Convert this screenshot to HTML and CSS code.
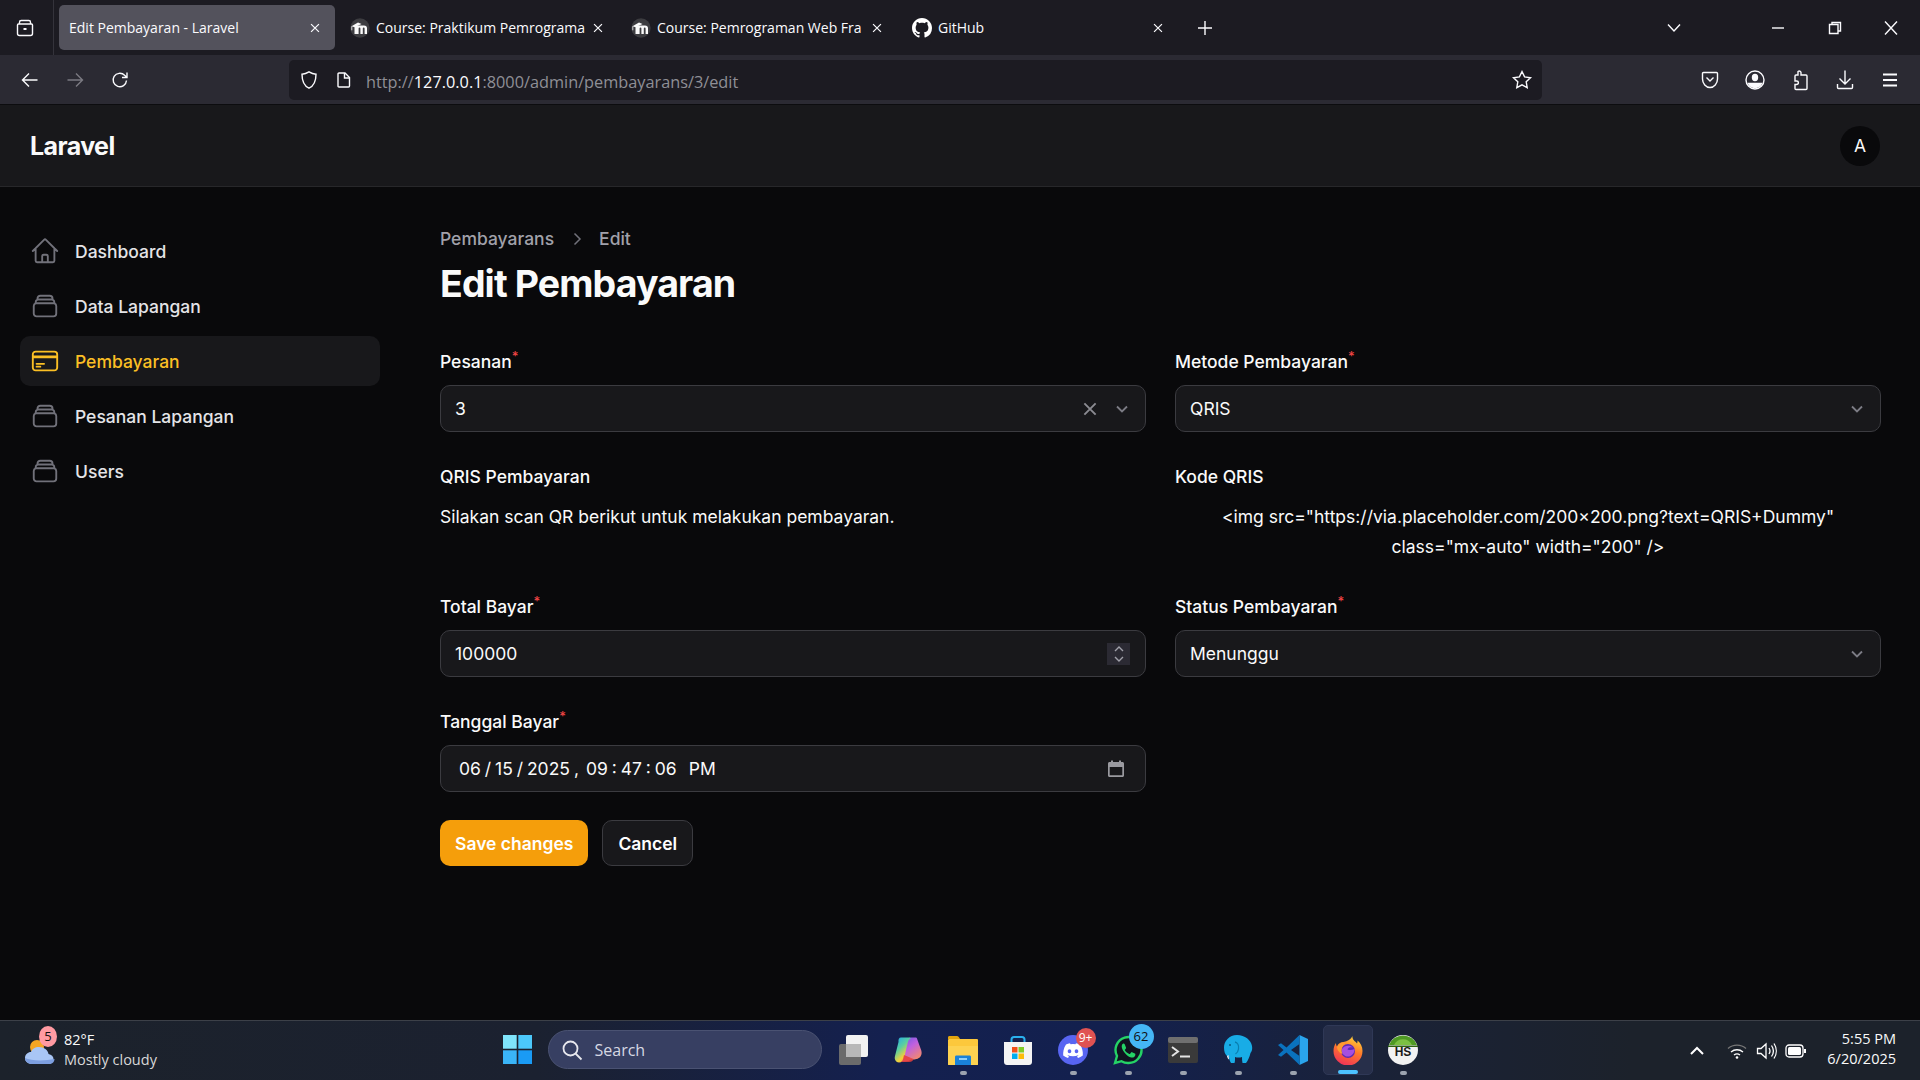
FILE: index.html
```html
<!DOCTYPE html>
<html>
<head>
  <title>Edit Pembayaran - Laravel</title>
  <link rel="stylesheet" href="styles.css">
</head>
<body>
  <svg class="defs" width="0" height="0">
    <symbol id="stack" viewBox="0 0 24 24"><path d="M6 6.878V6a2.25 2.25 0 012.25-2.25h7.5A2.25 2.25 0 0118 6v.878m-12 0c.235-.083.487-.128.75-.128h10.5c.263 0 .515.045.75.128m-12 0A2.25 2.25 0 004.5 9v.878m13.5-3A2.25 2.25 0 0119.5 9v.878m0 0a2.246 2.246 0 00-.75-.128H5.25c-.263 0-.515.045-.75.128m15 0A2.25 2.25 0 0121 12v6a2.25 2.25 0 01-2.25 2.25H5.25A2.25 2.25 0 013 18v-6c0-.98.626-1.813 1.5-2.122"/></symbol>
    <symbol id="chev" viewBox="0 0 20 20"><path d="M5 7.5l5 5 5-5"/></symbol>
    <symbol id="x" viewBox="0 0 16 16"><path d="M3.5 3.5l9 9M12.5 3.5l-9 9"/></symbol>
    <symbol id="moodle" viewBox="0 0 20 20"><circle cx="10" cy="10" r="9.700" fill="#3c3c40"/><path d="M4.500 16V9.500c0-1.300.9-2 2-2h7.500c1.900 0 3 1 3 2.800V16h-2.400V10.500c0-.6-.3-1-.9-1s-.9.4-.9 1V16h-2.400V10.500c0-.6-.3-1-.9-1s-.9.4-.9 1V16z" fill="#fafafa"/><path d="M1.500 8.300L8 4.500l3.500 1.500-7 3.200z" fill="#fafafa"/><path d="M1.800 8.300v4" stroke="#fafafa" stroke-width=".8"/></symbol>
  </svg>

  <div class="tabstrip">
    <div class="strip-btn">
      <svg class="ico" width="20" height="20" viewBox="0 0 20 20"><path d="M4.5 6V4.2c0-1 .7-1.7 1.7-1.7h7.6c1 0 1.7.7 1.7 1.7V6M3.5 6h13c.6 0 1 .4 1 1v8.500c0 1.100-.9 2-2 2h-11c-1.100 0-2-.9-2-2V7c0-.6.4-1 1-1z"/><path d="M8.500 11h3" stroke-width="2"/></svg>
    </div>
    <div class="tab tab-active">
      <span class="tab-title">Edit Pembayaran - Laravel</span>
      <svg class="ico tab-x" width="16" height="16"><use href="#x"/></svg>
    </div>
    <div class="tab">
      <svg class="favicon" width="20" height="20"><use href="#moodle"/></svg>
      <span class="tab-title">Course: Praktikum Pemrograma</span>
      <svg class="ico tab-x" width="16" height="16"><use href="#x"/></svg>
    </div>
    <div class="tab">
      <svg class="favicon" width="20" height="20"><use href="#moodle"/></svg>
      <span class="tab-title">Course: Pemrograman Web Fra</span>
      <svg class="ico tab-x" width="16" height="16"><use href="#x"/></svg>
    </div>
    <div class="tab">
      <svg class="favicon" width="20" height="20" viewBox="0 0 16 16"><path fill="#fff" d="M8 0C3.580 0 0 3.580 0 8c0 3.540 2.290 6.530 5.470 7.590.4.070.55-.17.55-.38 0-.19-.01-.82-.01-1.490-2.010.37-2.530-.49-2.690-.94-.09-.23-.48-.94-.82-1.130-.28-.15-.68-.52-.01-.53.63-.01 1.080.58 1.230.82.72 1.210 1.870.87 2.330.66.07-.52.28-.87.51-1.070-1.780-.2-3.640-.89-3.640-3.950 0-.87.31-1.590.82-2.150-.08-.2-.36-1.020.08-2.120 0 0 .67-.21 2.200.82.64-.18 1.320-.27 2-.27s1.360.09 2 .27c1.530-1.040 2.200-.82 2.200-.82.44 1.100.16 1.920.08 2.120.51.56.82 1.270.82 2.150 0 3.070-1.870 3.750-3.650 3.950.29.25.54.73.54 1.480 0 1.070-.01 1.930-.01 2.200 0 .21.15.46.55.38A8.010 8.010 0 0016 8c0-4.420-3.580-8-8-8z"/></svg>
      <span class="tab-title">GitHub</span>
      <svg class="ico tab-x" width="16" height="16"><use href="#x"/></svg>
    </div>
    <svg class="ico strip-plus" width="18" height="18" viewBox="0 0 18 18"><path d="M9 2v14M2 9h14"/></svg>
    <div class="strip-right">
      <svg class="ico" width="18" height="18" viewBox="0 0 18 18"><path d="M3 5.500l6 6.500 6-6.500"/></svg>
      <div class="win-btns">
        <svg class="ico win-min" width="14" height="14" viewBox="0 0 14 14"><path d="M1 7h12"/></svg>
        <svg class="ico" width="14" height="14" viewBox="0 0 14 14"><path d="M4 3V1.500h8.500V10H10.500M1.500 3.500H10V12.500H1.500z"/></svg>
        <svg class="ico" width="16" height="16" viewBox="0 0 16 16"><path d="M2 1.500l12 13M14 1.500l-12 13"/></svg>
      </div>
    </div>
  </div>

  <div class="navbar">
    <div class="nav-left">
      <svg class="ico" width="20" height="20" viewBox="0 0 20 20"><path d="M17.500 10h-15M9 3.500L2.500 10 9 16.500"/></svg>
      <svg class="ico ico-dim" width="20" height="20" viewBox="0 0 20 20"><path d="M2.500 10h15M11 3.500l6.500 6.500-6.500 6.500"/></svg>
      <svg class="ico" width="20" height="20" viewBox="0 0 20 20"><path d="M16.500 10.500a6.700 6.700 0 11-1.900-5.200L17 7.500M17 2.500v5h-5"/></svg>
    </div>
    <div class="urlbar">
      <svg class="ico" width="20" height="20" viewBox="0 0 20 20"><path d="M10 1.800c2.500 1.500 4.700 2.200 7 2.400 0 6.500-1.800 11.500-7 14-5.200-2.500-7-7.500-7-14 2.300-.2 4.500-.9 7-2.400z"/></svg>
      <svg class="ico url-page" width="18" height="18" viewBox="0 0 18 18"><path d="M4 2h6l4.500 4.500V15c0 .6-.4 1-1 1H4c-.6 0-1-.4-1-1V3c0-.6.4-1 1-1z"/><path d="M9.500 2v5h5" /></svg>
      <span class="url">http://<b>127.0.0.1</b>:8000/admin/pembayarans/3/edit</span>
      <svg class="ico url-star" width="22" height="22" viewBox="0 0 22 22"><path d="M11 2.500l2.600 5.400 5.900.8-4.300 4.100 1 5.900-5.200-2.800-5.200 2.800 1-5.900-4.300-4.100 5.900-.8z"/></svg>
    </div>
    <div class="nav-right">
      <svg class="ico" width="20" height="20" viewBox="0 0 20 20"><path d="M3.500 2.500h13c.6 0 1 .4 1 1V9c0 4.500-3.500 8.500-7.500 8.500S2.500 13.500 2.500 9V3.500c0-.6.400-1 1-1z"/><path d="M6.500 7.500L10 11l3.500-3.500"/></svg>
      <svg class="ico" width="22" height="22" viewBox="0 0 22 22"><circle cx="11" cy="11" r="9"/><ellipse cx="11" cy="8.500" rx="2.500" ry="3" fill="#fbfbfe"/><path d="M4.500 14.500h13c-1.500 3-4 4-6.500 4s-5-1-6.500-4z" fill="#fbfbfe"/></svg>
      <svg class="ico nav-ext" width="20" height="22" viewBox="0 0 20 22"><path d="M8 2.500c1.500-1 3.500 0 3 2v1.500h5c.6 0 1 .4 1 1v12.500c0 .6-.4 1-1 1H6c-.6 0-1-.4-1-1v-4h1.500c2.500 0 2.500-3.500 0-3.500H5V7c0-.6.4-1 1-1h2z"/></svg>
      <svg class="ico nav-dl" width="20" height="22" viewBox="0 0 20 22"><path d="M10 1.500v13M4.500 9.500l5.500 5.500 5.500-5.500M2.500 15v3.500c0 .6.400 1 1 1h13c.6 0 1-.4 1-1V15"/></svg>
      <svg class="ico" width="20" height="20" viewBox="0 0 20 20"><path d="M3 4.500h14M3 10h14M3 15.500h14" stroke-width="1.800"/></svg>
    </div>
  </div>

  <header class="app-header">
    <span class="brand">Laravel</span>
    <span class="avatar">A</span>
  </header>

  <div class="app-body">
    <nav class="sidebar">
      <a class="side-item">
        <svg class="side-ico" width="30" height="30" viewBox="0 0 24 24"><path d="M2.250 12l8.954-8.955c.44-.439 1.152-.439 1.591 0L21.750 12M4.500 9.750v10.125c0 .621.504 1.125 1.125 1.125H9.750v-4.875c0-.621.504-1.125 1.125-1.125h2.250c.621 0 1.125.504 1.125 1.125V21h4.125c.621 0 1.125-.504 1.125-1.125V9.750M8.250 21h8.250"/></svg>
        Dashboard
      </a>
      <a class="side-item"><svg class="side-ico" width="30" height="30"><use href="#stack"/></svg>Data Lapangan</a>
      <a class="side-item side-active">
        <svg class="side-ico" width="30" height="30" viewBox="0 0 24 24"><path d="M2.250 8.250h19.500M2.250 9h19.500m-16.500 5.250h6m-6 2.250h3m-3.750 3h15a2.250 2.250 0 002.250-2.250V6.750A2.250 2.250 0 0019.500 4.500h-15a2.250 2.250 0 00-2.250 2.250v10.500A2.250 2.250 0 004.500 19.500z"/></svg>
        Pembayaran
      </a>
      <a class="side-item"><svg class="side-ico" width="30" height="30"><use href="#stack"/></svg>Pesanan Lapangan</a>
      <a class="side-item"><svg class="side-ico" width="30" height="30"><use href="#stack"/></svg>Users</a>
    </nav>

    <main class="content">
      <div class="crumbs">
        <span>Pembayarans</span>
        <svg class="crumb-sep" width="20" height="20" viewBox="0 0 20 20"><path d="M7.500 4.500l5.500 5.500-5.500 5.500"/></svg>
        <span>Edit</span>
      </div>
      <h1>Edit Pembayaran</h1>

      <form class="form-grid">
        <div class="field">
          <label class="lbl">Pesanan<sup>*</sup></label>
          <div class="control">
            <span class="control-val">3</span>
            <svg class="ctl-ico ctl-x" width="20" height="20" viewBox="0 0 16 16"><use href="#x"/></svg>
            <svg class="ctl-ico" width="20" height="20"><use href="#chev"/></svg>
          </div>
        </div>
        <div class="field">
          <label class="lbl">Metode Pembayaran<sup>*</sup></label>
          <div class="control">
            <span class="control-val">QRIS</span>
            <svg class="ctl-ico" width="20" height="20"><use href="#chev"/></svg>
          </div>
        </div>

        <div class="field">
          <label class="lbl">QRIS Pembayaran</label>
          <p class="plain">Silakan scan QR berikut untuk melakukan pembayaran.</p>
        </div>
        <div class="field">
          <label class="lbl">Kode QRIS</label>
          <p class="plain plain-center">&lt;img src="https://via.placeholder.com/200x200.png?text=QRIS+Dummy" class="mx-auto" width="200" /&gt;</p>
        </div>

        <div class="field">
          <label class="lbl">Total Bayar<sup>*</sup></label>
          <div class="control">
            <span class="control-val">100000</span>
            <span class="spin">
              <svg width="12" height="10" viewBox="0 0 12 10"><path d="M2 7l4-4 4 4"/></svg>
              <svg width="12" height="10" viewBox="0 0 12 10"><path d="M2 3l4 4 4-4"/></svg>
            </span>
          </div>
        </div>
        <div class="field">
          <label class="lbl">Status Pembayaran<sup>*</sup></label>
          <div class="control">
            <span class="control-val">Menunggu</span>
            <svg class="ctl-ico" width="20" height="20"><use href="#chev"/></svg>
          </div>
        </div>

        <div class="field">
          <label class="lbl">Tanggal Bayar<sup>*</sup></label>
          <div class="control control-date">
            <span class="control-val date-val">06 / 15 / 2025 ,<span class="date-time">09 : 47 : 06</span><span class="date-ampm">PM</span></span>
            <svg class="cal" width="20" height="20" viewBox="0 0 20 20"><path d="M5 1.500h2V4H5zM13 1.500h2V4h-2z" fill="#9a9aa0"/><path d="M2 4.500c0-.8.7-1.500 1.500-1.500h13c.8 0 1.500.7 1.500 1.500v12c0 .8-.7 1.500-1.500 1.500h-13c-.8 0-1.500-.7-1.500-1.500zM3.700 8v8.300h12.600V8z" fill="#9a9aa0" fill-rule="evenodd"/></svg>
          </div>
        </div>
      </form>

      <div class="actions">
        <button class="btn btn-save" type="button">Save changes</button>
        <button class="btn btn-cancel" type="button">Cancel</button>
      </div>
    </main>
  </div>

  <footer class="taskbar">
    <div class="weather">
      <div class="weather-ico">
        <svg width="32" height="34" viewBox="0 0 32 34">
          <circle cx="13" cy="13" r="7" fill="#f5a623"/>
          <path d="M8 30c-4 0-7-2.500-7-6s3-6 6-6c1-3 4-5 8-5 5 0 9 3 9.500 7 3 .5 5 2.500 5 5 0 3-2.500 5-5.500 5z" fill="#a9c6f5"/>
          <path d="M8 30c-4 0-7-2.500-7-6 6 3 20 3 29.500 1 0 3-2.500 5-5.500 5z" fill="#7d9fe0"/>
        </svg>
        <span class="weather-badge">5</span>
      </div>
      <div class="weather-text">
        <span class="temp">82°F</span>
        <span class="cond">Mostly cloudy</span>
      </div>
    </div>

    <div class="task-center">
      <div class="task-btn">
        <svg width="29" height="29" viewBox="0 0 29 29"><path d="M0 0h13.700v13.700H0z" fill="#7fe4fb"/><path d="M15.300 0H29v13.700H15.300z" fill="#4cc8fa"/><path d="M0 15.300h13.700V29H0z" fill="#3ab4f7"/><path d="M15.300 15.300H29V29H15.300z" fill="#1a9bf5"/></svg>
      </div>
      <div class="search">
        <svg width="22" height="22" viewBox="0 0 22 22" class="search-ico"><circle cx="9.500" cy="9.500" r="7"/><path d="M14.500 14.500l6 6"/></svg>
        <span>Search</span>
      </div>
      <div class="task-btn">
        <svg width="30" height="30" viewBox="0 0 30 30"><rect x="1" y="9" width="22" height="21" rx="2" fill="#6b6b6b"/><rect x="8" y="0" width="22" height="22" rx="2" fill="#f2f2f2"/><rect x="8" y="9" width="15" height="13" fill="#b8b8b8"/></svg>
      </div>
      <div class="task-btn">
        <svg width="30" height="30" viewBox="0 0 30 30"><defs><linearGradient id="cp1" x1="0" y1="0" x2=".6" y2="1"><stop offset="0" stop-color="#1fa8f0"/><stop offset=".45" stop-color="#5ad0a0"/><stop offset=".8" stop-color="#f4d13a"/><stop offset="1" stop-color="#f0a030"/></linearGradient><linearGradient id="cp2" x1="0" y1="0" x2=".7" y2="1"><stop offset="0" stop-color="#5a5ae8"/><stop offset=".5" stop-color="#c060e0"/><stop offset="1" stop-color="#f48a6a"/></linearGradient></defs><path d="M23 2.500h-5c-2.500 0-3.500 1.500-4 3.500l-3.500 15c-.7 2.800-2 5-4.500 5 6 1 10 .5 12-1.500 1.500 0 7 .5 9.500-3 1-1.500 1.500-3.500.8-6L24.500 5c-.4-1.500-.7-2.500-1.500-2.500z" fill="url(#cp2)"/><path d="M8 2.500h8c1 0 1.700.4 1.800 1-1.800.6-2.500 2-2.900 3.600l-3.700 15.400c-.7 3-2.600 5-5.200 5-3 0-5-3-4-6.500l3.500-14C5.300 4 6 2.500 8 2.500z" fill="url(#cp1)"/><path d="M11 20l-.8 3.500c-.3 1.500-1.200 3-2.200 3.500h8c2.500 0 4-1 4.500-3z" fill="#e8403c" opacity=".85"/></svg>
      </div>
      <div class="task-btn has-dot">
        <svg width="30" height="30" viewBox="0 0 30 30"><path d="M0 2.500C0 1.500.7 1 1.500 1H9c1.200 0 2 1 3 3h-12z" fill="#e3a50e"/><rect y="4" width="30" height="26" rx="1" fill="#fcc83c"/><path d="M0 11h30v18c0 .6-.4 1-1 1H1c-.6 0-1-.4-1-1z" fill="#fdd251"/><path d="M7 22c0-1 .6-1.500 1.500-1.500h13c.9 0 1.500.5 1.500 1.500v8H7z" fill="#1a82d8"/><rect x="11" y="23" width="8" height="2" fill="#8fd0fa"/></svg>
      </div>
      <div class="task-btn">
        <svg width="30" height="30" viewBox="0 0 30 30"><path d="M8.500 8V4.500c0-1.400 1-2.500 2.500-2.500h8c1.500 0 2.500 1.100 2.500 2.500V8" fill="none" stroke="#2ab0ee" stroke-width="2"/><path d="M1 7h28v20c0 1.700-1.300 3-3 3H4c-1.700 0-3-1.300-3-3z" fill="#f4f4f4"/><rect x="9" y="12" width="5.500" height="5.500" fill="#f1511b"/><rect x="15.500" y="12" width="5.500" height="5.500" fill="#80cc28"/><rect x="9" y="18.500" width="5.500" height="5.500" fill="#00adef"/><rect x="15.500" y="18.500" width="5.500" height="5.500" fill="#fbbc09"/></svg>
      </div>
      <div class="task-btn has-dot task-badged">
        <svg width="30" height="30" viewBox="0 0 30 30"><circle cx="15" cy="15" r="15" fill="#5865f2"/><path d="M22 9.500a16 16 0 00-4-1.200l-.5 1a14 14 0 00-5 0l-.5-1a16 16 0 00-4 1.200C5.500 13.400 5 17 5.200 20.600c1.600 1.200 3.200 1.900 4.800 2.400l1-1.600c-.5-.2-1-.5-1.500-.8l.4-.3c3 1.400 7.200 1.400 10.200 0l.4.3c-.5.300-1 .6-1.500.8l1 1.600c1.600-.5 3.200-1.200 4.800-2.400.3-4.200-.6-7.700-2.800-11.100zM11.500 18.300c-1 0-1.800-.9-1.800-2s.8-2 1.800-2 1.800.9 1.800 2-.8 2-1.800 2zm7 0c-1 0-1.800-.9-1.800-2s.8-2 1.800-2 1.800.9 1.800 2-.8 2-1.800 2z" fill="#fff"/></svg>
        <span class="t-badge t-badge-red">9+</span>
      </div>
      <div class="task-btn has-dot task-badged">
        <svg width="30" height="30" viewBox="0 0 30 30"><path d="M2 28l2-7A13 13 0 1115 28a13 13 0 01-6.500-1.800z" fill="#10131f" stroke="#25d366" stroke-width="2.400"/><path d="M10.500 8.500c-.7 0-1.800 1-1.800 3 0 2.200 1.600 4.400 2 5 .4.500 3.200 5 7.500 6 2 .4 3.700-.7 4-2 .2-.8.200-1.500.1-1.700l-3.200-1.600c-.4-.2-.7 0-1 .4l-1 1.200c-.2.300-.5.300-.9.100-2.300-1-3.600-2.500-4.300-3.700-.2-.4 0-.6.200-.8l.8-1c.2-.3.2-.5.100-.8l-1.300-3.300c-.3-.7-.6-.8-1.200-.8z" fill="#25d366"/></svg>
        <span class="t-badge t-badge-blue">62</span>
      </div>
      <div class="task-btn has-dot">
        <svg width="30" height="26" viewBox="0 0 30 26"><rect width="30" height="26" rx="2" fill="#3a3a3a"/><rect width="30" height="6" rx="2" fill="#6f6f6f"/><path d="M4 10l6 4.500-6 4.500" fill="none" stroke="#e4e4e4" stroke-width="2"/><path d="M12 19.500h10" stroke="#e4e4e4" stroke-width="2"/></svg>
      </div>
      <div class="task-btn has-dot">
        <svg width="30" height="32" viewBox="0 0 30 32"><path d="M14 1c-4 0-7 1.500-9.500 4C2 7.500 1 10.500 1 13.500c0 4 1 7 3 8.500 1 .7 1.500 0 1.500-1 .5 3 1 6 2.500 8h3.500c.7-2 .5-4 .5-6 2 .7 5 .7 7 0 0 2 0 4 .5 6H23c2-2.500 3.500-6 4.500-10 1.500-2 2-4 1.500-7C28 6 22 1 14 1z" fill="#18ace6"/><path d="M4 22c.4 2 1 3 2 3.500 0-2-.3-3-.5-4.500z" fill="#e8f6fc"/><path d="M12 8c2.500.5 4 3.500 3.500 7-.3 2.500-1.500 4-3 5" fill="none" stroke="#0a7fb0" stroke-width="1.300"/><circle cx="7" cy="11" r="1" fill="#075a80"/></svg>
      </div>
      <div class="task-btn has-dot">
        <svg width="30" height="30" viewBox="0 0 30 30"><path d="M21.500 0L30 4v22l-8.500 4z" fill="#2aa4ec"/><path d="M21.500 0L8.500 12.500 3 8.300 0 10l5.500 5L0 20l3 1.700 5.500-4.200L21.500 30V21L13 15l8.500-6z" fill="#0a72be"/></svg>
      </div>
      <div class="task-btn task-active">
        <svg width="30" height="30" viewBox="0 0 30 30"><defs><linearGradient id="ff1" x1=".7" y1="0" x2=".3" y2="1"><stop offset="0" stop-color="#ffd23a"/><stop offset=".45" stop-color="#ff7a2a"/><stop offset="1" stop-color="#f0305a"/></linearGradient></defs><path d="M19.500 1c-.5 4 2.500 5 4.500 7.500.4-1 .6-1.500.5-3C27.500 8 29.500 11.500 29.500 16a14.500 14.500 0 01-29 0c0-3.500 1-6 2.500-8 0 1.500.3 2.500 1 3.500 1-3 3.500-4.500 6.500-4.500C14.500 6 18 4.500 19.500 1z" fill="url(#ff1)"/><circle cx="15" cy="16" r="7" fill="#5b2bb5"/><path d="M9 14c2-3.500 7.500-4.500 11-1.500-2-.5-5-.5-5.500 2 2.500 1 5 .5 7-.5.3 4.500-3.500 8-7.500 7.500-3.500-.5-6-4-5-7.500z" fill="#a64fe0"/><path d="M4 12c1.500-3 5-5.500 10-5 -2 1-4 3-5 6-.6 2-.5 4 .5 6-3-1-5.500-4-5.500-7z" fill="#ff9a30"/></svg>
      </div>
      <div class="task-btn has-dot">
        <svg width="30" height="30" viewBox="0 0 30 30"><circle cx="15" cy="15" r="15" fill="#f2f2f2"/><path d="M1 10a15 15 0 0128 0z" fill="#4f9a24"/><path d="M6 10a10 10 0 0118 0z" fill="#7cc043"/><path d="M0 10.500h30v1.500H0z" fill="#2e6412"/><text x="15" y="21" class="hs-text">HS</text></svg>
      </div>
    </div>

    <div class="tray">
      <svg class="tray-ico" width="16" height="16" viewBox="0 0 16 16"><path d="M2 11l6-6 6 6" stroke-width="2"/></svg>
      <svg class="tray-ico tray-wifi" width="20" height="20" viewBox="0 0 20 20"><path d="M1 7.500c5-4.500 13-4.500 18 0" stroke="#777"/><path d="M4 11c3.500-3 8.500-3 12 0M7 14c1.800-1.400 4.200-1.400 6 0"/><circle cx="10" cy="16.500" r="1.300" fill="#fff" stroke="none"/></svg>
      <svg class="tray-ico" width="22" height="22" viewBox="0 0 22 22"><path d="M2.500 8.500v5h3.500l5 4.500V4L6 8.500zM14 8c1.200 1.800 1.200 4.200 0 6M16.500 5.500c2.300 3.300 2.300 7.700 0 11M19 3.500c3 4.500 3 10.500 0 15"/></svg>
      <svg class="tray-ico" width="22" height="16" viewBox="0 0 22 16"><rect x="1" y="2" width="17" height="12" rx="3"/><rect x="3" y="4" width="13" height="8" rx="1.500" fill="#fff" stroke="none"/><path d="M20 6v4" stroke-width="2"/></svg>
      <div class="clock">
        <span>5:55 PM</span>
        <span>6/20/2025</span>
      </div>
    </div>
  </footer>
</body>
</html>
```
FILE: styles.css
```css
* {
  box-sizing: border-box;
}
body {
  margin: 0;
  width: 1920px;
  height: 1080px;
  overflow: hidden;
  display: flex;
  flex-direction: column;
  background: #09090b;
  color: #fafafa;
  font-family: Inter, 'Liberation Sans', sans-serif;
  font-size: 17.5px;
}
.defs {
  position: absolute;
}
.ico {
  fill: none;
  stroke: #fbfbfe;
  stroke-width: 1.4;
  flex: none;
}
.ico-dim {
  stroke: #7b7a82;
}

/* browser tabs */
.tabstrip {
  height: 55px;
  flex: none;
  display: flex;
  align-items: center;
  background: #1c1b22;
  font-family: 'Open Sans', sans-serif;
  font-size: 14px;
  color: #fbfbfe;
}
.strip-btn {
  width: 54px;
  height: 55px;
  padding-right: 4px;
  display: flex;
  align-items: center;
  justify-content: center;
  border-right: 1px solid #34333b;
  margin-right: 5px;
}
.tab {
  width: 276px;
  height: 45px;
  margin-right: 5px;
  padding: 0 13px 0 10px;
  display: flex;
  align-items: center;
  gap: 6px;
  border-radius: 5px;
}
.tab-active {
  background: #53525c;
}
.tab-title {
  flex: 1;
  white-space: nowrap;
}
.favicon {
  flex: none;
}
.tab-x {
  width: 14px;
  height: 14px;
}
.strip-plus {
  margin-left: 13px;
}
.strip-right {
  margin-left: auto;
  padding-right: 21px;
  display: flex;
  align-items: center;
  gap: 88px;
}
.win-btns {
  display: flex;
  align-items: center;
  gap: 41px;
}
.win-min {
  margin-right: 2px;
}

/* address bar */
.navbar {
  height: 50px;
  flex: none;
  display: flex;
  align-items: center;
  background: #2b2a33;
  border-bottom: 1px solid #0c0c0f;
}
.nav-left {
  width: 289px;
  padding-left: 20px;
  display: flex;
  align-items: center;
  gap: 25px;
}
.urlbar {
  width: 1253px;
  height: 40px;
  padding: 0 9px 0 10px;
  display: flex;
  align-items: center;
  gap: 15px;
  background: #1c1b22;
  border-radius: 5px;
}
.url-page {
  margin-left: 1px;
}
.url {
  flex: 1;
  margin-left: -2px;
  padding-top: 5px;
  font-family: 'Open Sans', sans-serif;
  font-size: 16.300px;
  color: #8f8f96;
}
.url b {
  font-weight: 400;
  color: #fbfbfe;
}
.nav-right {
  margin-left: auto;
  padding-right: 20px;
  display: flex;
  align-items: center;
  gap: 24px;
}
.nav-ext,
.nav-dl {
  margin-right: 1px;
}

/* panel header */
.app-header {
  height: 82px;
  flex: none;
  padding: 0 40px 0 30px;
  display: flex;
  align-items: center;
  justify-content: space-between;
  background: #18181b;
  border-bottom: 1px solid #27272a;
}
.brand {
  font-size: 25px;
  font-weight: 700;
  letter-spacing: -0.6px;
}
.avatar {
  width: 40px;
  height: 40px;
  border-radius: 50%;
  display: flex;
  align-items: center;
  justify-content: center;
  background: #09090b;
  font-size: 17.5px;
  font-weight: 400;
}

.app-body {
  flex: 1;
  display: flex;
  min-height: 0;
}

/* sidebar */
.sidebar {
  width: 400px;
  flex: none;
  padding: 39px 20px 0;
  display: flex;
  flex-direction: column;
  gap: 5px;
}
.side-item {
  height: 50px;
  padding: 0 10px;
  display: flex;
  align-items: center;
  gap: 15px;
  border-radius: 10px;
  color: #e4e4e7;
  font-weight: 500;
}
.side-ico {
  flex: none;
  fill: none;
  stroke: #71717a;
  stroke-width: 1.5;
  stroke-linecap: round;
  stroke-linejoin: round;
}
.side-active {
  background: #18181b;
  color: #fbbf24;
}
.side-active .side-ico {
  stroke: #fbbf24;
}

/* main form */
.content {
  flex: 1;
  padding: 39px 39px 0 40px;
}
.crumbs {
  height: 25px;
  display: flex;
  align-items: center;
  gap: 12.500px;
  color: #a1a1aa;
  font-weight: 500;
}
.crumb-sep {
  fill: none;
  stroke: #71717a;
  stroke-width: 1.5;
}
h1 {
  margin: 10px 0 43px;
  font-size: 37.500px;
  line-height: 45px;
  font-weight: 700;
  letter-spacing: -0.9px;
}
.form-grid {
  display: grid;
  grid-template-columns: 1fr 1fr;
  column-gap: 29px;
  row-gap: 32px;
}
.lbl {
  display: block;
  line-height: 25px;
  font-weight: 500;
}
.lbl sup {
  color: #ef4444;
  font-size: 13px;
  line-height: 0;
  font-weight: 500;
}
.control {
  height: 47px;
  margin-top: 11px;
  padding: 0 13px 0 14px;
  display: flex;
  align-items: center;
  gap: 12px;
  background: #18181b;
  border: 1.500px solid #3b3b40;
  border-radius: 10px;
}
.control-val {
  flex: 1;
}
.ctl-ico {
  flex: none;
  fill: none;
  stroke: #7c7c85;
  stroke-width: 1.800;
}
.ctl-x {
  stroke: #8b8b92;
  stroke-width: 1.500;
}
.spin {
  width: 23px;
  height: 22px;
  margin-right: 2px;
  display: flex;
  flex-direction: column;
  align-items: center;
  justify-content: center;
  background: #2b2a33;
}
.spin svg {
  fill: none;
  stroke: #a1a1aa;
  stroke-width: 1.400;
}
.control-date {
  padding-left: 18px;
  padding-right: 19px;
}
.date-val {
  word-spacing: -1px;
}
.date-time {
  margin-left: 7px;
}
.date-ampm {
  margin-left: 12px;
}
.cal {
  flex: none;
}
.plain {
  margin: 13px 0 0;
  line-height: 30px;
}
.plain-center {
  padding: 0 40px;
  text-align: center;
}
.actions {
  margin-top: 28px;
  display: flex;
  align-items: center;
  gap: 14px;
}
.btn {
  height: 46px;
  padding: 0 15px;
  border-radius: 10px;
  font-family: inherit;
  font-size: 17.500px;
  font-weight: 600;
  color: #fff;
}
.btn-save {
  background: #f59e0b;
  border: none;
}
.btn-cancel {
  background: #18181b;
  border: 1.500px solid #3b3b40;
}

/* windows taskbar */
.taskbar {
  height: 60px;
  flex: none;
  display: grid;
  grid-template-columns: 1fr auto 1fr;
  align-items: center;
  background: linear-gradient(90deg, #1c222b 0%, #1b2130 28%, #14204f 46%, #13204e 58%, #1a2237 72%, #1c222b 85%);
  border-top: 1px solid #3c4048;
  font-family: 'Open Sans', sans-serif;
  font-size: 14px;
}
.weather {
  padding-left: 24px;
  display: flex;
  align-items: center;
  gap: 8px;
}
.weather-ico {
  position: relative;
  width: 32px;
  height: 34px;
}
.weather-badge {
  position: absolute;
  left: 15px;
  top: -8px;
  width: 18px;
  height: 21px;
  border-radius: 50%;
  display: flex;
  align-items: center;
  justify-content: center;
  background: #ff9aa2;
  color: #111;
  font-size: 13px;
}
.weather-text {
  display: flex;
  flex-direction: column;
  margin-top: -2px;
  line-height: 20px;
  font-size: 14.500px;
}
.cond {
  color: #d8d8d8;
}
.task-center {
  margin-top: -2px;
  display: flex;
  align-items: center;
}
.task-btn {
  position: relative;
  width: 55px;
  height: 50px;
  display: flex;
  align-items: center;
  justify-content: center;
}
.task-btn > svg {
  flex: none;
}
.has-dot::after {
  content: "";
  position: absolute;
  left: 24px;
  bottom: 0;
  width: 7px;
  height: 4px;
  border-radius: 2px;
  background: #9ca3af;
}
.task-active {
  background: #272f4a;
  border: 1px solid #2f3856;
  border-radius: 5px;
  width: 50px;
  margin: 0 2.500px;
}
.task-active::after {
  content: "";
  position: absolute;
  left: 14px;
  bottom: 0;
  width: 20px;
  height: 4px;
  border-radius: 2px;
  background: #4cc2ff;
}
.t-badge {
  position: absolute;
  top: 3px;
  left: 30px;
  min-width: 20px;
  height: 20px;
  padding: 0 2px;
  border-radius: 10px;
  display: flex;
  align-items: center;
  justify-content: center;
  font-size: 12px;
  color: #fff;
}
.t-badge-red {
  background: #e05252;
}
.t-badge-blue {
  left: 28px;
  min-width: 25px;
  height: 25px;
  top: -1px;
  border-radius: 50%;
  background: #45b6f5;
  color: #111;
  font-size: 13px;
}
.hs-text {
  text-anchor: middle;
  font-family: 'Liberation Sans', sans-serif;
  font-size: 12px;
  font-weight: 700;
  fill: #1a1a1a;
}
.search {
  width: 274px;
  height: 39px;
  margin: 0 4px 0 3px;
  padding-left: 12px;
  display: flex;
  align-items: center;
  gap: 12px;
  background: #373f62;
  border: 1px solid #4a5272;
  border-radius: 20px;
  color: #d6d8e2;
  font-size: 16px;
}
.search-ico {
  fill: none;
  stroke: #e8e8ee;
  stroke-width: 1.800;
}
.tray {
  padding-right: 24px;
  display: flex;
  align-items: center;
  justify-content: flex-end;
  gap: 8px;
}
.tray-ico {
  flex: none;
  fill: none;
  stroke: #fff;
  stroke-width: 1.300;
}
.tray-wifi {
  margin-left: 14px;
}
.clock {
  margin-left: 12px;
  margin-bottom: 3px;
  display: flex;
  flex-direction: column;
  align-items: flex-end;
  line-height: 20px;
  font-size: 14.500px;
}
```
